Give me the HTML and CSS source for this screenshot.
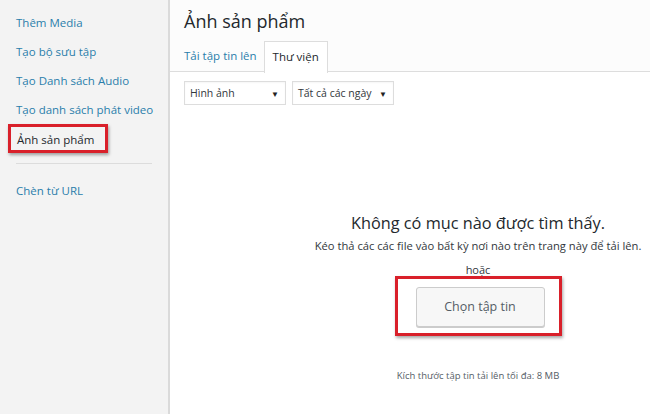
FILE: index.html
```html
<!DOCTYPE html>
<html lang="vi">
<head>
<meta charset="utf-8">
<link rel="stylesheet" href="styles.css">
</head>
<body>
<div class="frame">
  <aside class="sidebar">
    <nav class="menu">
      <a class="item">Thêm Media</a>
      <a class="item">Tạo bộ sưu tập</a>
      <a class="item">Tạo Danh sách Audio</a>
      <a class="item">Tạo danh sách phát video</a>
      <a class="item active"><span class="mark">Ảnh sản phẩm</span></a>
      <div class="sep"></div>
      <a class="item">Chèn từ URL</a>
    </nav>
  </aside>
  <main class="main">
    <header class="head">
      <h1 class="title">Ảnh sản phẩm</h1>
      <div class="tabs">
        <span class="tab">Tải tập tin lên</span>
        <span class="tab current">Thư viện</span>
      </div>
    </header>
    <div class="toolbar">
      <div class="select s1"><span>Hình ảnh</span><span class="arrow">▼</span></div>
      <div class="select s2"><span>Tất cả các ngày</span><span class="arrow">▼</span></div>
    </div>
    <section class="uploader">
      <h2 class="empty">Không có mục nào được tìm thấy.</h2>
      <p class="drop">Kéo thả các các file vào bất kỳ nơi nào trên trang này để tải lên.</p>
      <p class="or">hoặc</p>
      <div class="btnwrap">
        <span class="button">Chọn tập tin</span>
      </div>
      <p class="max">Kích thước tập tin tải lên tối đa: 8 MB</p>
    </section>
  </main>
</div>
</body>
</html>
```
FILE: styles.css
```css
* { box-sizing: border-box; }
html, body { margin: 0; padding: 0; }
body {
  width: 650px;
  height: 414px;
  overflow: hidden;
  background: #fff;
  font-family: "Open Sans", "Noto Sans", sans-serif;
  color: #23282d;
}
.frame {
  display: flex;
  height: 414px;
}
.sidebar {
  width: 170px;
  flex: none;
  background: #f3f3f3;
  border-right: 2px solid #dadada;
}
.menu {
  display: flex;
  flex-direction: column;
  padding-top: 13px;
}
.item {
  display: block;
  height: 29px;
  line-height: 20px;
  padding-left: 16px;
  font-size: 11.5px;
  color: #2a7eab;
  text-decoration: none;
}
.item.active { color: #23282d; }
.mark {
  display: inline-block;
  margin-left: -8px;
  margin-top: -5px;
  padding: 3px 6px 3px 6px;
  width: 100px;
  height: 29px;
  line-height: 20px;
  border: 3px solid #d9202a;
  box-shadow: 1px 2px 3px rgba(0,0,0,0.35);
}
.sep {
  height: 1px;
  margin: 5px 16px 17px 16px;
  background: #dcdcdc;
}
.main {
  flex: none;
  width: 616px;
  display: flex;
  flex-direction: column;
}
.head {
  background: #fcfcfc;
  border-bottom: 1px solid #dddddd;
  padding: 9px 0 0 14px;
  height: 72px;
  display: flex;
  flex-direction: column;
}
.title {
  margin: 0;
  font-size: 18px;
  font-weight: 400;
  line-height: 24px;
  color: #23282d;
}
.tabs {
  display: flex;
  margin-top: 8px;
  align-items: flex-end;
}
.tab {
  display: block;
  height: 31px;
  line-height: 29px;
  font-size: 11.5px;
  color: #2a7eab;
  padding-right: 7px;
}
.tab.current {
  color: #23282d;
  background: #fff;
  border: 1px solid #dddddd;
  border-bottom: none;
  padding: 0 8px;
  height: 32px;
  margin-bottom: -1px;
}
.toolbar {
  display: flex;
  gap: 6px;
  padding: 9px 0 0 14px;
}
.select {
  height: 24px;
  border: 1px solid #dddddd;
  background: #fff;
  display: flex;
  align-items: center;
  justify-content: space-between;
  padding: 0 6px 0 5px;
  font-size: 10.5px;
  color: #32373c;
  box-shadow: inset 0 1px 2px rgba(0,0,0,0.04);
}
.s1 { width: 102px; }
.s2 { width: 102px; }
.arrow { font-size: 8px; color: #222; }
.uploader {
  text-align: center;
  padding-top: 106px;
}
.empty {
  margin: 0;
  font-size: 16.3px;
  font-weight: 400;
  line-height: 24px;
  color: #23282d;
}
.drop {
  margin: 3px 0 0 0;
  font-size: 11.2px;
  line-height: 16px;
  color: #32373c;
}
.or {
  margin: 9px 0 0 0;
  font-size: 11px;
  line-height: 14px;
  color: #32373c;
}
.btnwrap {
  display: inline-block;
  margin-top: -1px;
  width: 167px;
  height: 60px;
  border: 3px solid #d9202a;
  box-shadow: 1px 2px 3px rgba(0,0,0,0.35);
  padding: 8px 0 0 18px;
  text-align: left;
}
.button {
  display: inline-block;
  width: 129px;
  height: 40px;
  line-height: 38px;
  text-align: center;
  background: #f7f7f7;
  border: 1px solid #cccccc;
  border-radius: 3px;
  box-shadow: 0 1px 0 #cccccc;
  font-size: 12.5px;
  color: #555d66;
}
.max {
  margin: 33px 0 0 0;
  font-size: 9.5px;
  line-height: 14px;
  color: #555d66;
}
```
